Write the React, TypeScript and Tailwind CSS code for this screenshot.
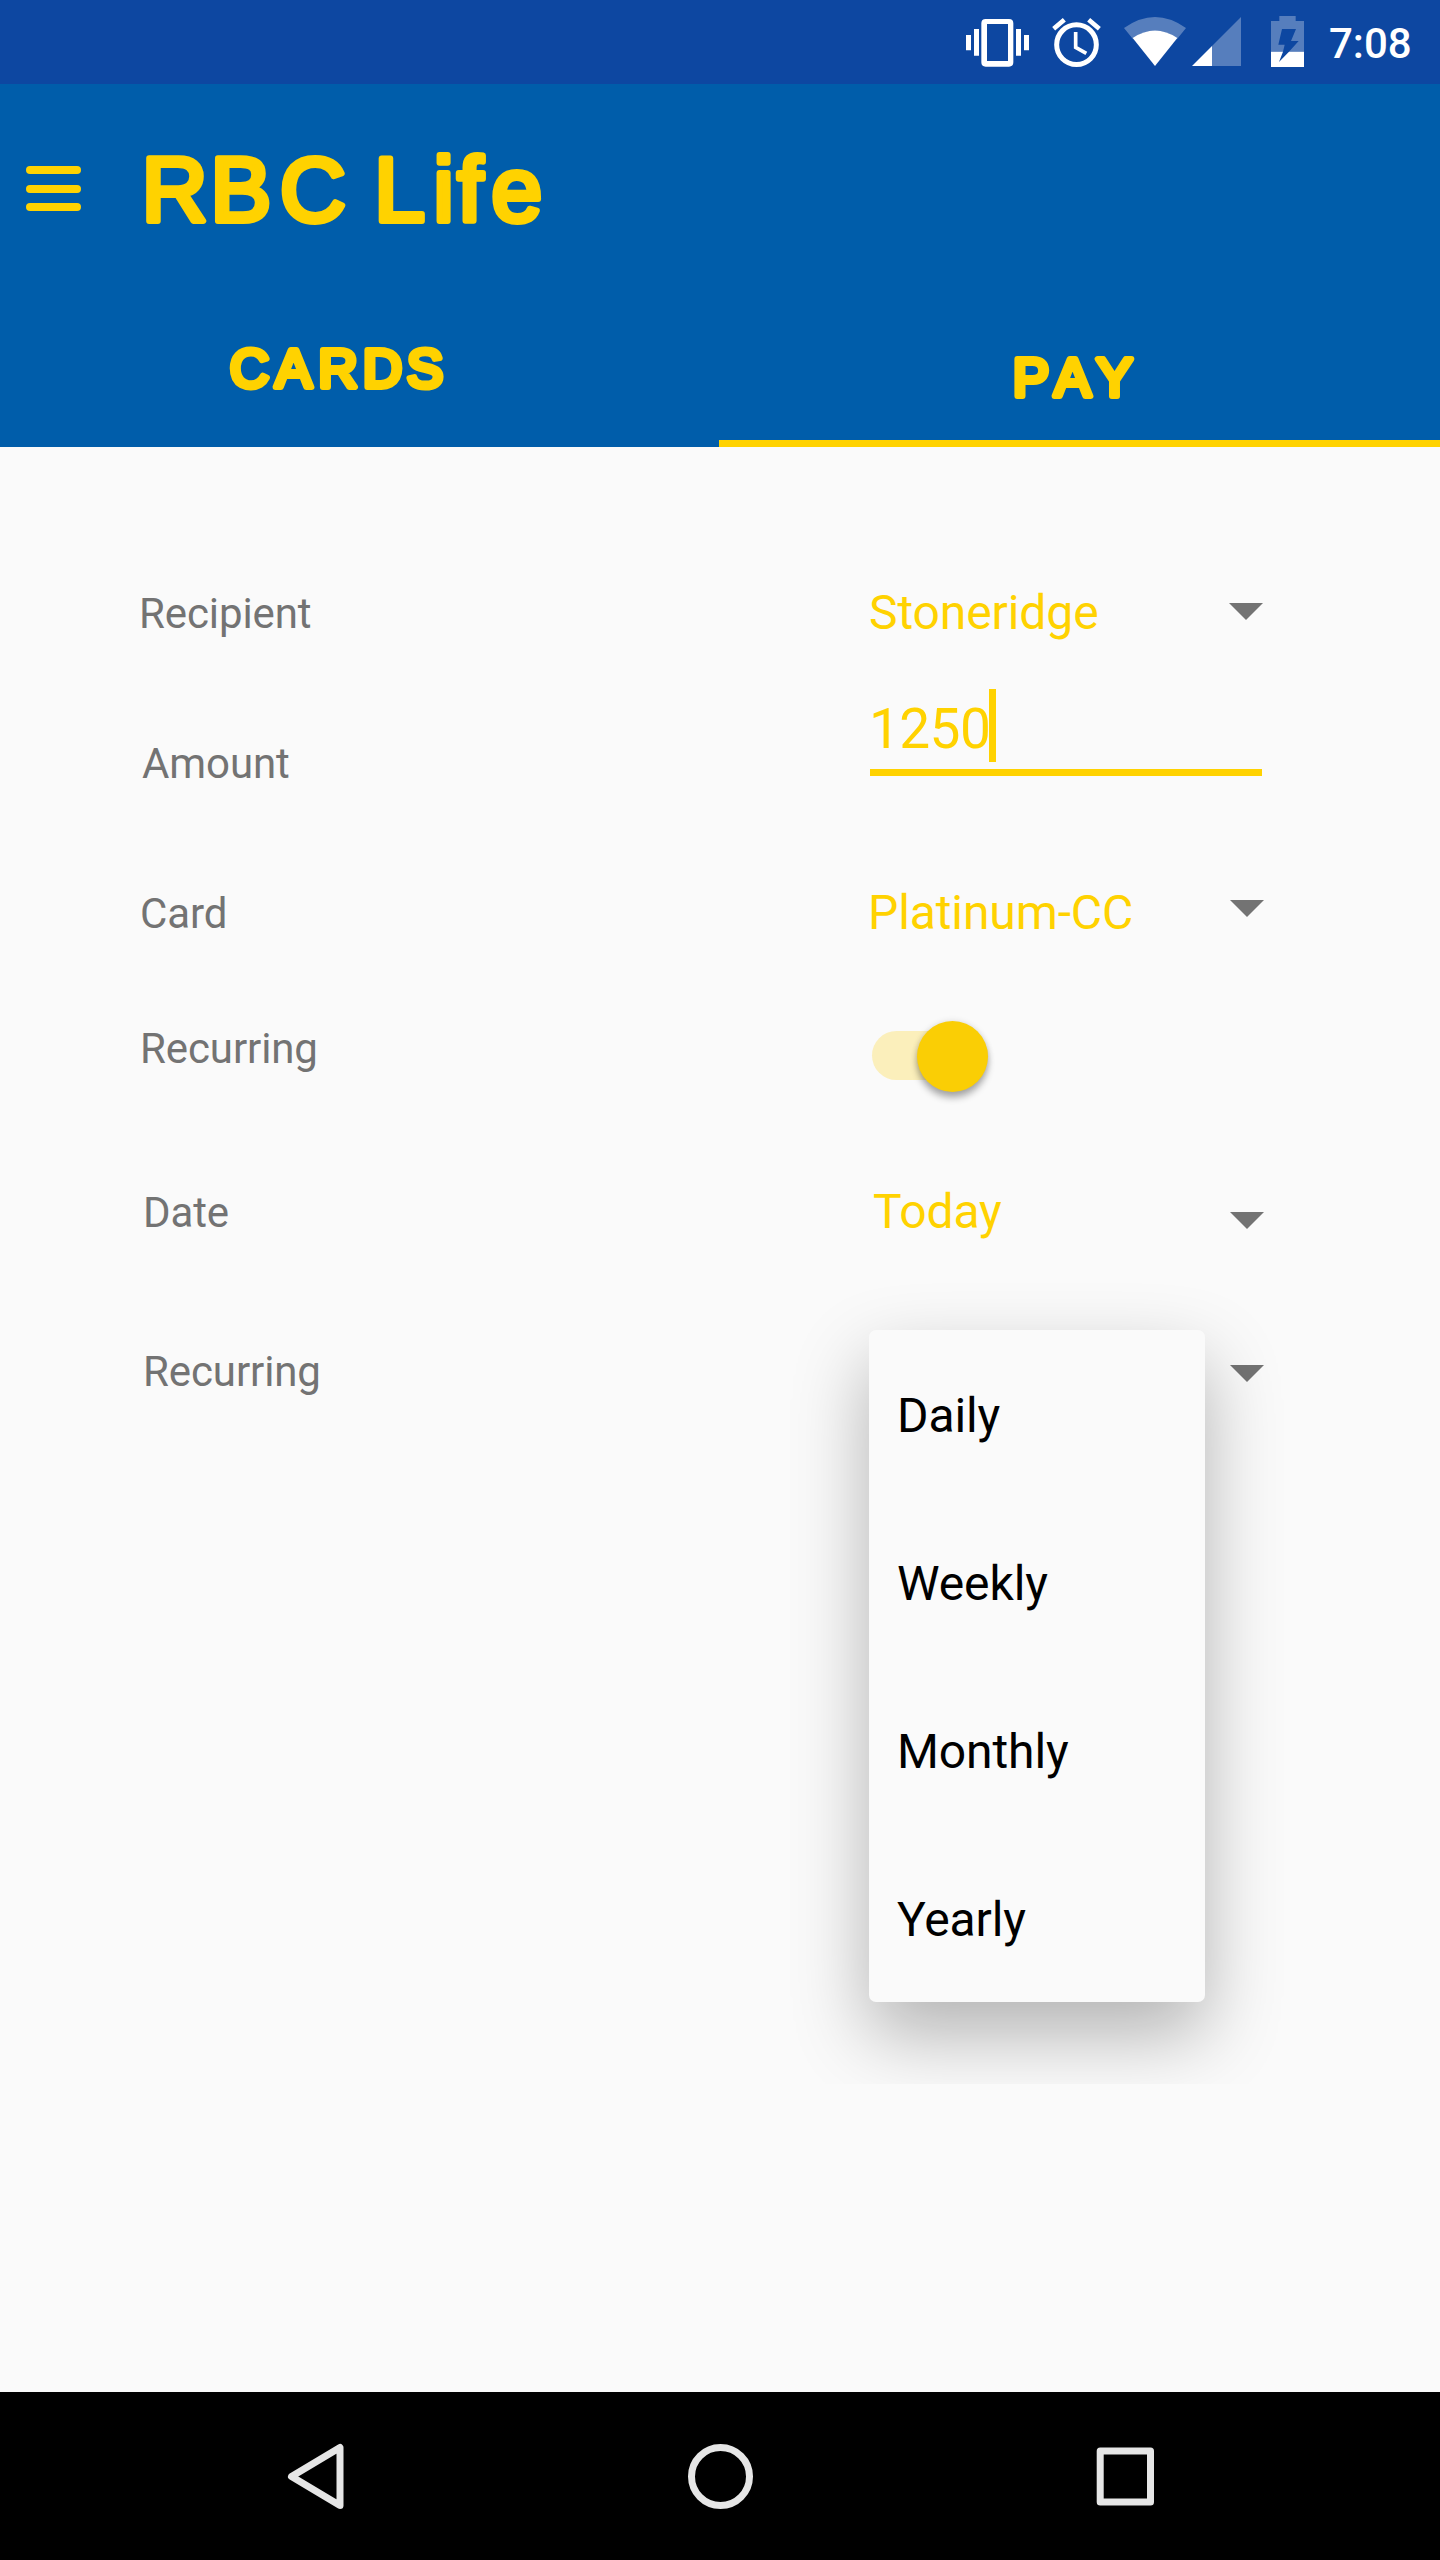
import type { ReactNode } from "react";

function StatusBar() {
  return (
    <div className="flex h-[84px] bg-[#0d47a1] pl-[965px] text-white">
      <svg className="h-[84px] w-[65px]" viewBox="75 0 195 252" fill="currentColor">
        <path fillRule="evenodd" d="M137 57h70q13 0 13 13v117q0 13-13 13h-70q-13 0-13-13V70q0-13 13-13Zm4 15v111h63V72Z" />
        <path d="M78 105h15v46H78zM102 87h15v80h-15zM228 87h15v80h-15zM252 105h15v46h-15z" />
      </svg>
      <svg className="ml-[21px] h-[84px] w-[51px]" viewBox="333 0 153 252" fill="none" stroke="currentColor">
        <circle cx="409.500" cy="134" r="59.500" strokeWidth="15" />
        <path d="M407 96v46l32 18" strokeWidth="11" />
        <path d="M341 86l32-27M478 86l-32-27" strokeWidth="14" />
      </svg>
      <svg className="ml-[21px] h-[84px] w-[64px]" viewBox="549 0 192 252" fill="currentColor">
        <path d="M552 84Q645 18 738 84L712 116Q645 69 578 116Z" opacity=".3" />
        <path d="M578 114Q645 69 712 114L645 198Z" />
      </svg>
      <svg className="ml-1 h-[84px] w-[51px]" viewBox="753 0 153 252" fill="currentColor">
        <path d="M903 51V198H816V138Z" opacity=".3" />
        <path d="M756 198L816 138V198Z" />
      </svg>
      <svg className="ml-7 h-[84px] w-[35px]" viewBox="990 0 105 252" fill="currentColor">
        <path fillRule="evenodd" d="M1018 48h49v15h25v92H1047L1076 123H1053L1068 87H1026L1015 134H1034L1029 155H993V63h25Z" opacity=".3" />
        <path d="M993 155H1029L1017 186L1047 155H1092V201H993Z" />
      </svg>
      <span className="ml-[24px] mt-[19px] text-[42px] font-medium leading-[49px]">7:08</span>
    </div>
  );
}

function Header() {
  return (
    <header className="h-[363px] bg-[#005daa] text-[#ffd200]">
      <div className="flex h-[216px]">
        <div className="ml-[26px] mt-[82px] flex h-[45px] w-[55px] flex-col justify-between">
          <i className="h-2 rounded-[4px] bg-current" />
          <i className="h-2 rounded-[4px] bg-current" />
          <i className="h-2 rounded-[4px] bg-current" />
        </div>
        <svg className="ml-[39px] h-[216px] w-[480px]" viewBox="120 84 480 216" fill="currentColor" stroke="currentColor" strokeWidth="6" strokeLinejoin="round">
          <text className="font-['Liberation_Sans'] text-[91px]" x="141.700 210.500 280 332 374.300 433.500 457.500 491.500" y="221">RBC Life</text>
        </svg>
      </div>
      <nav className="grid h-[147px] grid-cols-[719px_721px]">
        <div>
          <svg className="h-[140px] w-full" viewBox="0 300 719 140" fill="currentColor" stroke="currentColor" strokeWidth="6" strokeLinejoin="round">
            <text className="font-['Liberation_Sans'] text-[54px]" x="230 275.500 318.500 363 407" y="386.500">CARDS</text>
          </svg>
        </div>
        <div className="border-b-[7px] border-[#ffd200]">
          <svg className="h-[140px] w-full" viewBox="719 300 721 140" fill="currentColor" stroke="currentColor" strokeWidth="6" strokeLinejoin="round">
            <text className="font-['Liberation_Sans'] text-[54px]" x="1013 1054.500 1096.500" y="396">PAY</text>
          </svg>
        </div>
      </nav>
    </header>
  );
}

function Arrow({ className }: { className: string }) {
  return (
    <svg className={className} width="34" height="17" viewBox="0 0 34 17" fill="#737373">
      <path d="M0 0H34L17 17Z" />
    </svg>
  );
}

function Row({ height, label, labelClass, children }: { height: string; label: string; labelClass: string; children: ReactNode }) {
  return (
    <div className={`relative flex items-start ${height}`}>
      <div className="w-[869px] shrink-0">
        <div className={`text-[42px] leading-[49px] tracking-[-0.1px] text-[#737373] ${labelClass}`}>{label}</div>
      </div>
      <div className="flex w-[395px] items-start justify-between text-[48px] leading-[57px] tracking-[-0.1px] text-[#ffd200]">{children}</div>
    </div>
  );
}

function PeriodMenu() {
  return (
    <ul className="absolute left-[869px] top-[20px] w-[336px] rounded-[7px] bg-[#fafafa] text-[48px] leading-[168px] tracking-[-0.1px] text-black shadow-[0_32px_76px_rgba(0,0,0,0.29)] [clip-path:inset(-100px_-100px_-82px_-100px)]">
      {["Daily", "Weekly", "Monthly", "Yearly"].map((item) => (
        <li key={item} className="h-[168px] pl-7 pt-[2px]">{item}</li>
      ))}
    </ul>
  );
}

function PaymentForm() {
  return (
    <main className="h-[1945px] pt-[113px]">
      <Row height="h-[120px]" label="Recipient" labelClass="ml-[139px] mt-[29px]">
        <span className="mt-[24px]">Stoneridge</span>
        <Arrow className="mr-px mt-[43px]" />
      </Row>
      <Row height="h-[170px]" label="Amount" labelClass="ml-[142px] mt-[59px]">
        <div className="ml-px mt-[9px] flex h-[87px] w-[392px] items-start border-b-[7px] border-[#ffd200]">
          <span className="-ml-px mt-[7px] w-[120px] text-[55px] leading-[66px] tracking-[-0.6px]">1250</span>
          <i className="h-[73px] w-[7px] bg-[#ffd200]" />
        </div>
      </Row>
      <Row height="h-[150px]" label="Card" labelClass="ml-[140px] mt-[39px]">
        <span className="-ml-px mt-[34px]">Platinum-CC</span>
        <Arrow className="mt-[50px]" />
      </Row>
      <Row height="h-[150px]" label="Recurring" labelClass="ml-[140px] mt-[24px]">
        <div className="ml-[3px] mt-[31px] h-[49px] w-[116px] rounded-full bg-[#fbefbb]">
          <div className="-mt-[10px] ml-[45px] size-[71px] rounded-full bg-[#face05] shadow-[0_6px_7px_rgba(0,0,0,0.3),0_0_6px_rgba(0,0,0,0.12)]" />
        </div>
      </Row>
      <Row height="h-[160px]" label="Date" labelClass="ml-[143px] mt-[38px]">
        <span className="ml-[4px] mt-[33px]">Today</span>
        <Arrow className="mt-[62px]" />
      </Row>
      <Row height="h-[150px]" label="Recurring" labelClass="ml-[143px] mt-[37px]">
        <span />
        <Arrow className="mt-[55px]" />
        <PeriodMenu />
      </Row>
    </main>
  );
}

function NavigationBar() {
  return (
    <footer className="flex h-[168px] items-center bg-black">
      <svg className="ml-[280px] h-[168px] w-[72px]" viewBox="280 2392 72 168" fill="none" stroke="#e6e6e6" strokeWidth="7" strokeLinejoin="round">
        <path d="M340 2447.500V2505.500L291.500 2476.500Z" />
      </svg>
      <svg className="ml-[332px] h-[168px] w-[72px]" viewBox="684 2392 72 168" fill="none" stroke="#e6e6e6" strokeWidth="7">
        <circle cx="720.500" cy="2476.500" r="29" />
      </svg>
      <svg className="ml-[333px] h-[168px] w-[72px]" viewBox="1089 2392 72 168" fill="none" stroke="#e6e6e6" strokeWidth="7">
        <path strokeLinejoin="round" d="M1100.200 2451H1150.500V2502H1100.200Z" />
      </svg>
    </footer>
  );
}

export default function App() {
  return (
    <div className="h-[2560px] w-[1440px] overflow-hidden bg-[#fafafa] font-[Roboto,sans-serif]">
      <StatusBar />
      <Header />
      <PaymentForm />
      <NavigationBar />
    </div>
  );
}
